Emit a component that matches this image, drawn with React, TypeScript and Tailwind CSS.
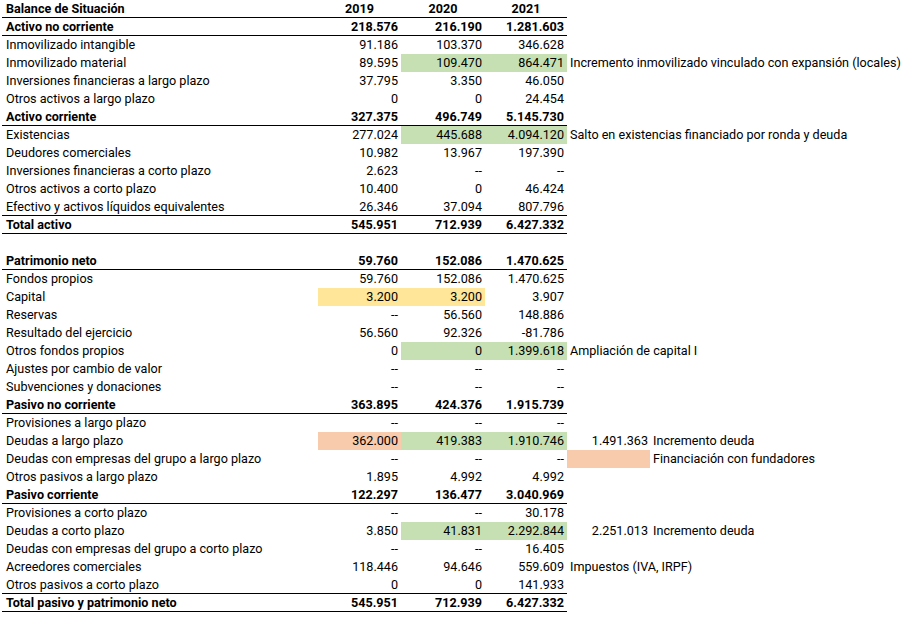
import React from 'react';

type Fill = 'g' | 'y' | 'p' | null;

type Row = {
  label?: string;
  vals?: string[];
  bold?: boolean;
  header?: boolean;
  border?: boolean;
  fills?: Fill[];
  note?: string;
  e?: string;
  eFill?: Fill;
  f?: string;
};

const fillClass = (f: Fill | undefined) =>
  f === 'g' ? 'bg-[#c6e0b4]' : f === 'y' ? 'bg-[#ffe699]' : f === 'p' ? 'bg-[#f8cbad]' : '';

const rows: Row[] = [
  { label: 'Balance de Situación', vals: ['2019', '2020', '2021'], bold: true, header: true, border: true },
  { label: 'Activo no corriente', vals: ['218.576', '216.190', '1.281.603'], bold: true, border: true },
  { label: 'Inmovilizado intangible', vals: ['91.186', '103.370', '346.628'] },
  { label: 'Inmovilizado material', vals: ['89.595', '109.470', '864.471'], fills: [null, 'g', 'g'], note: 'Incremento inmovilizado vinculado con expansión (locales)' },
  { label: 'Inversiones financieras a largo plazo', vals: ['37.795', '3.350', '46.050'] },
  { label: 'Otros activos a largo plazo', vals: ['0', '0', '24.454'] },
  { label: 'Activo corriente', vals: ['327.375', '496.749', '5.145.730'], bold: true, border: true },
  { label: 'Existencias', vals: ['277.024', '445.688', '4.094.120'], fills: [null, 'g', 'g'], note: 'Salto en existencias financiado por ronda y deuda' },
  { label: 'Deudores comerciales', vals: ['10.982', '13.967', '197.390'] },
  { label: 'Inversiones financieras a corto plazo', vals: ['2.623', '--', '--'] },
  { label: 'Otros activos a corto plazo', vals: ['10.400', '0', '46.424'] },
  { label: 'Efectivo y activos líquidos equivalentes', vals: ['26.346', '37.094', '807.796'], border: true },
  { label: 'Total activo', vals: ['545.951', '712.939', '6.427.332'], bold: true, border: true },
  {},
  { label: 'Patrimonio neto', vals: ['59.760', '152.086', '1.470.625'], bold: true, border: true },
  { label: 'Fondos propios', vals: ['59.760', '152.086', '1.470.625'] },
  { label: 'Capital', vals: ['3.200', '3.200', '3.907'], fills: ['y', 'y', null] },
  { label: 'Reservas', vals: ['--', '56.560', '148.886'] },
  { label: 'Resultado del ejercicio', vals: ['56.560', '92.326', '-81.786'] },
  { label: 'Otros fondos propios', vals: ['0', '0', '1.399.618'], fills: [null, 'g', 'g'], note: 'Ampliación de capital I' },
  { label: 'Ajustes por cambio de valor', vals: ['--', '--', '--'] },
  { label: 'Subvenciones y donaciones', vals: ['--', '--', '--'] },
  { label: 'Pasivo no corriente', vals: ['363.895', '424.376', '1.915.739'], bold: true, border: true },
  { label: 'Provisiones a largo plazo', vals: ['--', '--', '--'] },
  { label: 'Deudas a largo plazo', vals: ['362.000', '419.383', '1.910.746'], fills: ['p', 'g', 'g'], e: '1.491.363', f: 'Incremento deuda' },
  { label: 'Deudas con empresas del grupo a largo plazo', vals: ['--', '--', '--'], eFill: 'p', f: 'Financiación con fundadores' },
  { label: 'Otros pasivos a largo plazo', vals: ['1.895', '4.992', '4.992'] },
  { label: 'Pasivo corriente', vals: ['122.297', '136.477', '3.040.969'], bold: true, border: true },
  { label: 'Provisiones a corto plazo', vals: ['--', '--', '30.178'] },
  { label: 'Deudas a corto plazo', vals: ['3.850', '41.831', '2.292.844'], fills: [null, 'g', 'g'], e: '2.251.013', f: 'Incremento deuda' },
  { label: 'Deudas con empresas del grupo a corto plazo', vals: ['--', '--', '16.405'] },
  { label: 'Acreedores comerciales', vals: ['118.446', '94.646', '559.609'], note: 'Impuestos (IVA, IRPF)' },
  { label: 'Otros pasivos a corto plazo', vals: ['0', '0', '141.933'], border: true },
  { label: 'Total pasivo y patrimonio neto', vals: ['545.951', '712.939', '6.427.332'], bold: true, border: true },
];

const widths = ['w-[83px]', 'w-[84px]', 'w-[82px]'];

function SheetRow({ r }: { r: Row }) {
  return (
    <div className="flex h-[18px] leading-[18px]">
      <div className={`flex w-[565px] shrink-0 ${r.border ? 'border-b border-black' : ''} ${r.bold ? 'font-bold' : ''}`}>
        <div className="w-[316px] shrink-0 pl-[4px] whitespace-nowrap">{r.label}</div>
        {(r.vals ?? ['', '', '']).map((v, i) => (
          <div
            key={i}
            className={`${widths[i]} shrink-0 ${r.header ? 'text-center' : 'text-right pr-[3px]'} ${fillClass(r.fills?.[i])}`}
          >
            {v}
          </div>
        ))}
      </div>
      {r.note ? (
        <div className="pl-[3px] whitespace-nowrap">{r.note}</div>
      ) : (
        <>
          <div className={`w-[83px] shrink-0 text-right pr-[2px] ${fillClass(r.eFill)}`}>{r.e}</div>
          <div className="pl-[3px] whitespace-nowrap">{r.f}</div>
        </>
      )}
    </div>
  );
}

export default function App() {
  return (
    <div className="w-[903px] h-[622px] bg-white text-black text-[12.6px] font-['Roboto',sans-serif] pl-[2px] overflow-hidden">
      {rows.map((r, i) => (
        <SheetRow key={i} r={r} />
      ))}
    </div>
  );
}
